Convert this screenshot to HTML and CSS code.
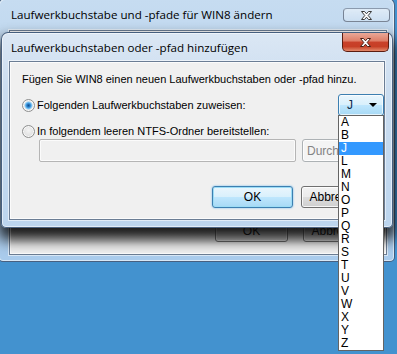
FILE: index.html
```html
<!DOCTYPE html>
<html>
<head>
<meta charset="utf-8">
<link rel="stylesheet" href="styles.css">
</head>
<body class="desktop">
  <div class="win back">
    <div class="titlebar back-title">
      <span class="title">Laufwerkbuchstabe und -pfade für WIN8 ändern</span>
      <div class="close inactive">
        <svg width="13" height="11" viewBox="0 0 13 11"><path d="M1.5 1.5h3l2 2.3 2-2.3h3l-3.3 4 3.3 4h-3l-2-2.3-2 2.3h-3l3.3-4z" fill="#fff" stroke="#3a3a3a" stroke-width="1" stroke-linejoin="round"/></svg>
      </div>
    </div>
    <div class="client back-client">
      <div class="btnrow back-btns">
        <div class="btn back-ok">OK</div>
        <div class="btn back-cancel">Abbrechen</div>
      </div>
    </div>
  </div>

  <div class="win front">
    <div class="titlebar front-title">
      <span class="title">Laufwerkbuchstaben oder -pfad hinzufügen</span>
      <div class="close active">
        <svg width="13" height="11" viewBox="0 0 13 11"><path d="M1.5 1.5h3l2 2.3 2-2.3h3l-3.3 4 3.3 4h-3l-2-2.3-2 2.3h-3l3.3-4z" fill="#fff" stroke="#4a1e14" stroke-width="1" stroke-linejoin="round"/></svg>
      </div>
    </div>
    <div class="client front-client">
      <p class="intro">Fügen Sie WIN8 einen neuen Laufwerkbuchstaben oder -pfad hinzu.</p>
      <div class="row row1">
        <label class="opt"><span class="radio checked"></span><span>Folgenden Laufwerkbuchstaben zuweisen:</span></label>
        <div class="combo"><span>J</span><span class="arrow"></span></div>
      </div>
      <div class="row row2">
        <label class="opt"><span class="radio"></span><span>In folgendem leeren NTFS-Ordner bereitstellen:</span></label>
      </div>
      <div class="row row3">
        <div class="input"></div>
        <div class="btn disabled">Durchsuchen...</div>
      </div>
      <div class="row row4">
        <div class="btn default">OK</div>
        <div class="btn cancel">Abbrechen</div>
      </div>
    </div>
  </div>

  <ul class="droplist">
    <li>A</li><li>B</li><li class="sel">J</li><li>L</li><li>M</li><li>N</li><li>O</li><li>P</li><li>Q</li><li>R</li><li>S</li><li>T</li><li>U</li><li>V</li><li>W</li><li>X</li><li>Y</li><li>Z</li>
  </ul>
</body>
</html>
```
FILE: styles.css
```css
html, body {
  margin: 0;
  padding: 0;
}
.desktop {
  width: 397px;
  height: 354px;
  overflow: hidden;
  position: relative;
  background: #4392cf;
  font-family: "Liberation Sans", Arial, sans-serif;
  font-size: 11px;
  color: #000;
}
.win {
  position: absolute;
  box-sizing: border-box;
  border: 1px solid rgba(30, 55, 90, 0.75);
  border-radius: 7px 7px 5px 5px;
  display: flex;
  flex-direction: column;
  box-shadow: inset 0 0 0 1px rgba(255, 255, 255, 0.55);
}
.back {
  left: -2px;
  top: -2px;
  width: 397px;
  height: 264px;
  padding: 0 7px 6px 10px;
  background: linear-gradient(#c6dcf1, #bad3ec 40%, #a9cbec);
}
.front {
  left: 1px;
  top: 32px;
  width: 392px;
  height: 196px;
  padding: 0 7px 7px 7px;
  background: linear-gradient(#dbe7f4, #cbddf0 30%, #bcd5ee);
  box-shadow: inset 0 0 0 1px rgba(255, 255, 255, 0.55), 0 9px 14px 3px rgba(0, 0, 0, 0.8);
}
.titlebar {
  display: flex;
  align-items: flex-start;
  justify-content: space-between;
}
.title {
  font-family: "Open Sans", "Liberation Sans", sans-serif;
  font-size: 11.6px;
  color: #000;
  padding-left: 2px;
  white-space: nowrap;
}
.back-title {
  height: 31px;
}
.back-title .title {
  margin-top: 9px;
  line-height: 14px;
}
.front-title {
  height: 28px;
}
.front-title .title {
  margin-top: 8px;
  line-height: 14px;
}
.close {
  width: 47px;
  box-sizing: border-box;
  border: 1px solid rgba(40, 50, 70, 0.55);
  border-top: none;
  border-radius: 0 0 5px 5px;
  display: flex;
  align-items: center;
  justify-content: center;
}
.close.inactive {
  height: 14px;
  margin-top: 9px;
  margin-right: -3px;
  background: linear-gradient(rgba(255,255,255,0.45), rgba(255,255,255,0.15));
  border-top: 1px solid rgba(40, 50, 70, 0.4);
  border-radius: 4px;
}
.close.active {
  height: 19px;
  margin-right: -4px;
  border-color: #5b1c10;
  background: linear-gradient(#eaa898 0%, #de7d66 45%, #c9412a 50%, #c63f26 75%, #e38a6b 100%);
}
.client {
  flex: 1;
  box-sizing: border-box;
  background: #f0f0f0;
  border: 1px solid #6b7d94;
  box-shadow: 0 0 0 1px rgba(255, 255, 255, 0.55), inset 0 0 0 1px #fbfbfb;
}
.back-client {
  display: flex;
  flex-direction: column;
  justify-content: flex-end;
  padding: 0 0 12px 0;
  background: linear-gradient(to top, #f0f0f0 0, #f0f0f0 9px, #d0d0d0 17px, #8c8c8c 26px, #7a7a7a 40px);
}
.back-btns {
  display: flex;
  gap: 15px;
  padding-left: 205px;
}
.btn {
  box-sizing: border-box;
  height: 23px;
  border: 1px solid #707070;
  border-radius: 3px;
  background: linear-gradient(#f2f2f2 0%, #ebebeb 49%, #dddddd 51%, #cfcfcf 100%);
  box-shadow: inset 0 0 0 1px rgba(255, 255, 255, 0.8);
  display: flex;
  align-items: center;
  justify-content: center;
  font-size: 12px;
  white-space: nowrap;
  overflow: hidden;
}
.back-btns .btn {
  background: linear-gradient(#6e6e6e 0%, #8a8a8a 40%, #b8b8b8 60%, #d2d2d2 100%);
  box-shadow: inset 0 0 0 1px rgba(255, 255, 255, 0.35);
  color: #222;
}
.back-ok {
  width: 73px;
}
.back-cancel {
  width: 75px;
}
.front-client {
  padding: 10px 0 0 12px;
  display: flex;
  flex-direction: column;
}
.intro {
  margin: 0;
  line-height: 14px;
  white-space: nowrap;
}
.row {
  display: flex;
  align-items: center;
}
.row1 {
  margin-top: 8px;
  height: 22px;
  justify-content: space-between;
}
.row2 {
  margin-top: 7px;
  height: 16px;
}
.opt {
  display: flex;
  align-items: center;
  gap: 2px;
  white-space: nowrap;
}
.radio {
  width: 13px;
  height: 13px;
  box-sizing: border-box;
  border-radius: 50%;
  border: 1px solid #8e8f8f;
  background: radial-gradient(circle at 50% 40%, #f4f4f4, #d5d5d5);
  box-shadow: inset 0 0 0 1px #f8f8f8;
}
.radio.checked {
  background: radial-gradient(circle at 50% 50%, #0f4f8e 0, #2a7cc6 1.6px, #5fb2ec 2.8px, #9cd2f5 3.6px, #e6e6e6 4.4px, #f2f2f2 6px);
}
.combo {
  width: 46px;
  height: 22px;
  box-sizing: border-box;
  border: 1px solid #3c7fb1;
  border-radius: 3px;
  background: linear-gradient(#eaf6fd 0%, #d9f0fc 48%, #bee6fd 52%, #a7d9f5 100%);
  box-shadow: inset 0 0 0 1px rgba(255, 255, 255, 0.7);
  display: flex;
  align-items: center;
  justify-content: space-between;
  padding: 0 6px 0 8px;
  font-size: 12px;
  color: #0b2a4a;
}
.arrow {
  width: 0;
  height: 0;
  border-left: 4px solid transparent;
  border-right: 4px solid transparent;
  border-top: 4px solid #000;
}
.row3 {
  height: 23px;
  padding-left: 17px;
  gap: 6px;
}
.input {
  width: 257px;
  height: 23px;
  box-sizing: border-box;
  border: 1px solid #b5b5b5;
  border-radius: 2px;
  background: #f0f0f0;
  box-shadow: inset 0 0 0 1px #fbfbfb;
}
.btn.disabled {
  width: 75px;
  color: #838383;
  border-color: #adb2b5;
  background: #f4f4f4;
  justify-content: flex-start;
  padding-left: 4px;
}
.row4 {
  margin-top: 24px;
  padding-left: 190px;
  gap: 8px;
}
.row4 .btn {
  height: 22px;
}
.btn.default {
  width: 81px;
  border-color: #3c7fb1;
  background: linear-gradient(#eaf6fd 0%, #d9f0fc 49%, #bee6fd 51%, #a7d9f5 100%);
  box-shadow: inset 0 0 0 1px #9cdcf5, 0 0 2px #5fb2ec;
}
.btn.cancel {
  width: 75px;
}
.droplist {
  position: absolute;
  left: 338px;
  top: 115px;
  width: 46px;
  margin: 0;
  padding: 0;
  list-style: none;
  box-sizing: border-box;
  background: #fff;
  border: 1px solid #646464;
  font-size: 12px;
}
.droplist li {
  height: 13px;
  line-height: 13px;
  padding-left: 2px;
}
.droplist li.sel {
  background: #3399ff;
  color: #fff;
}
```
